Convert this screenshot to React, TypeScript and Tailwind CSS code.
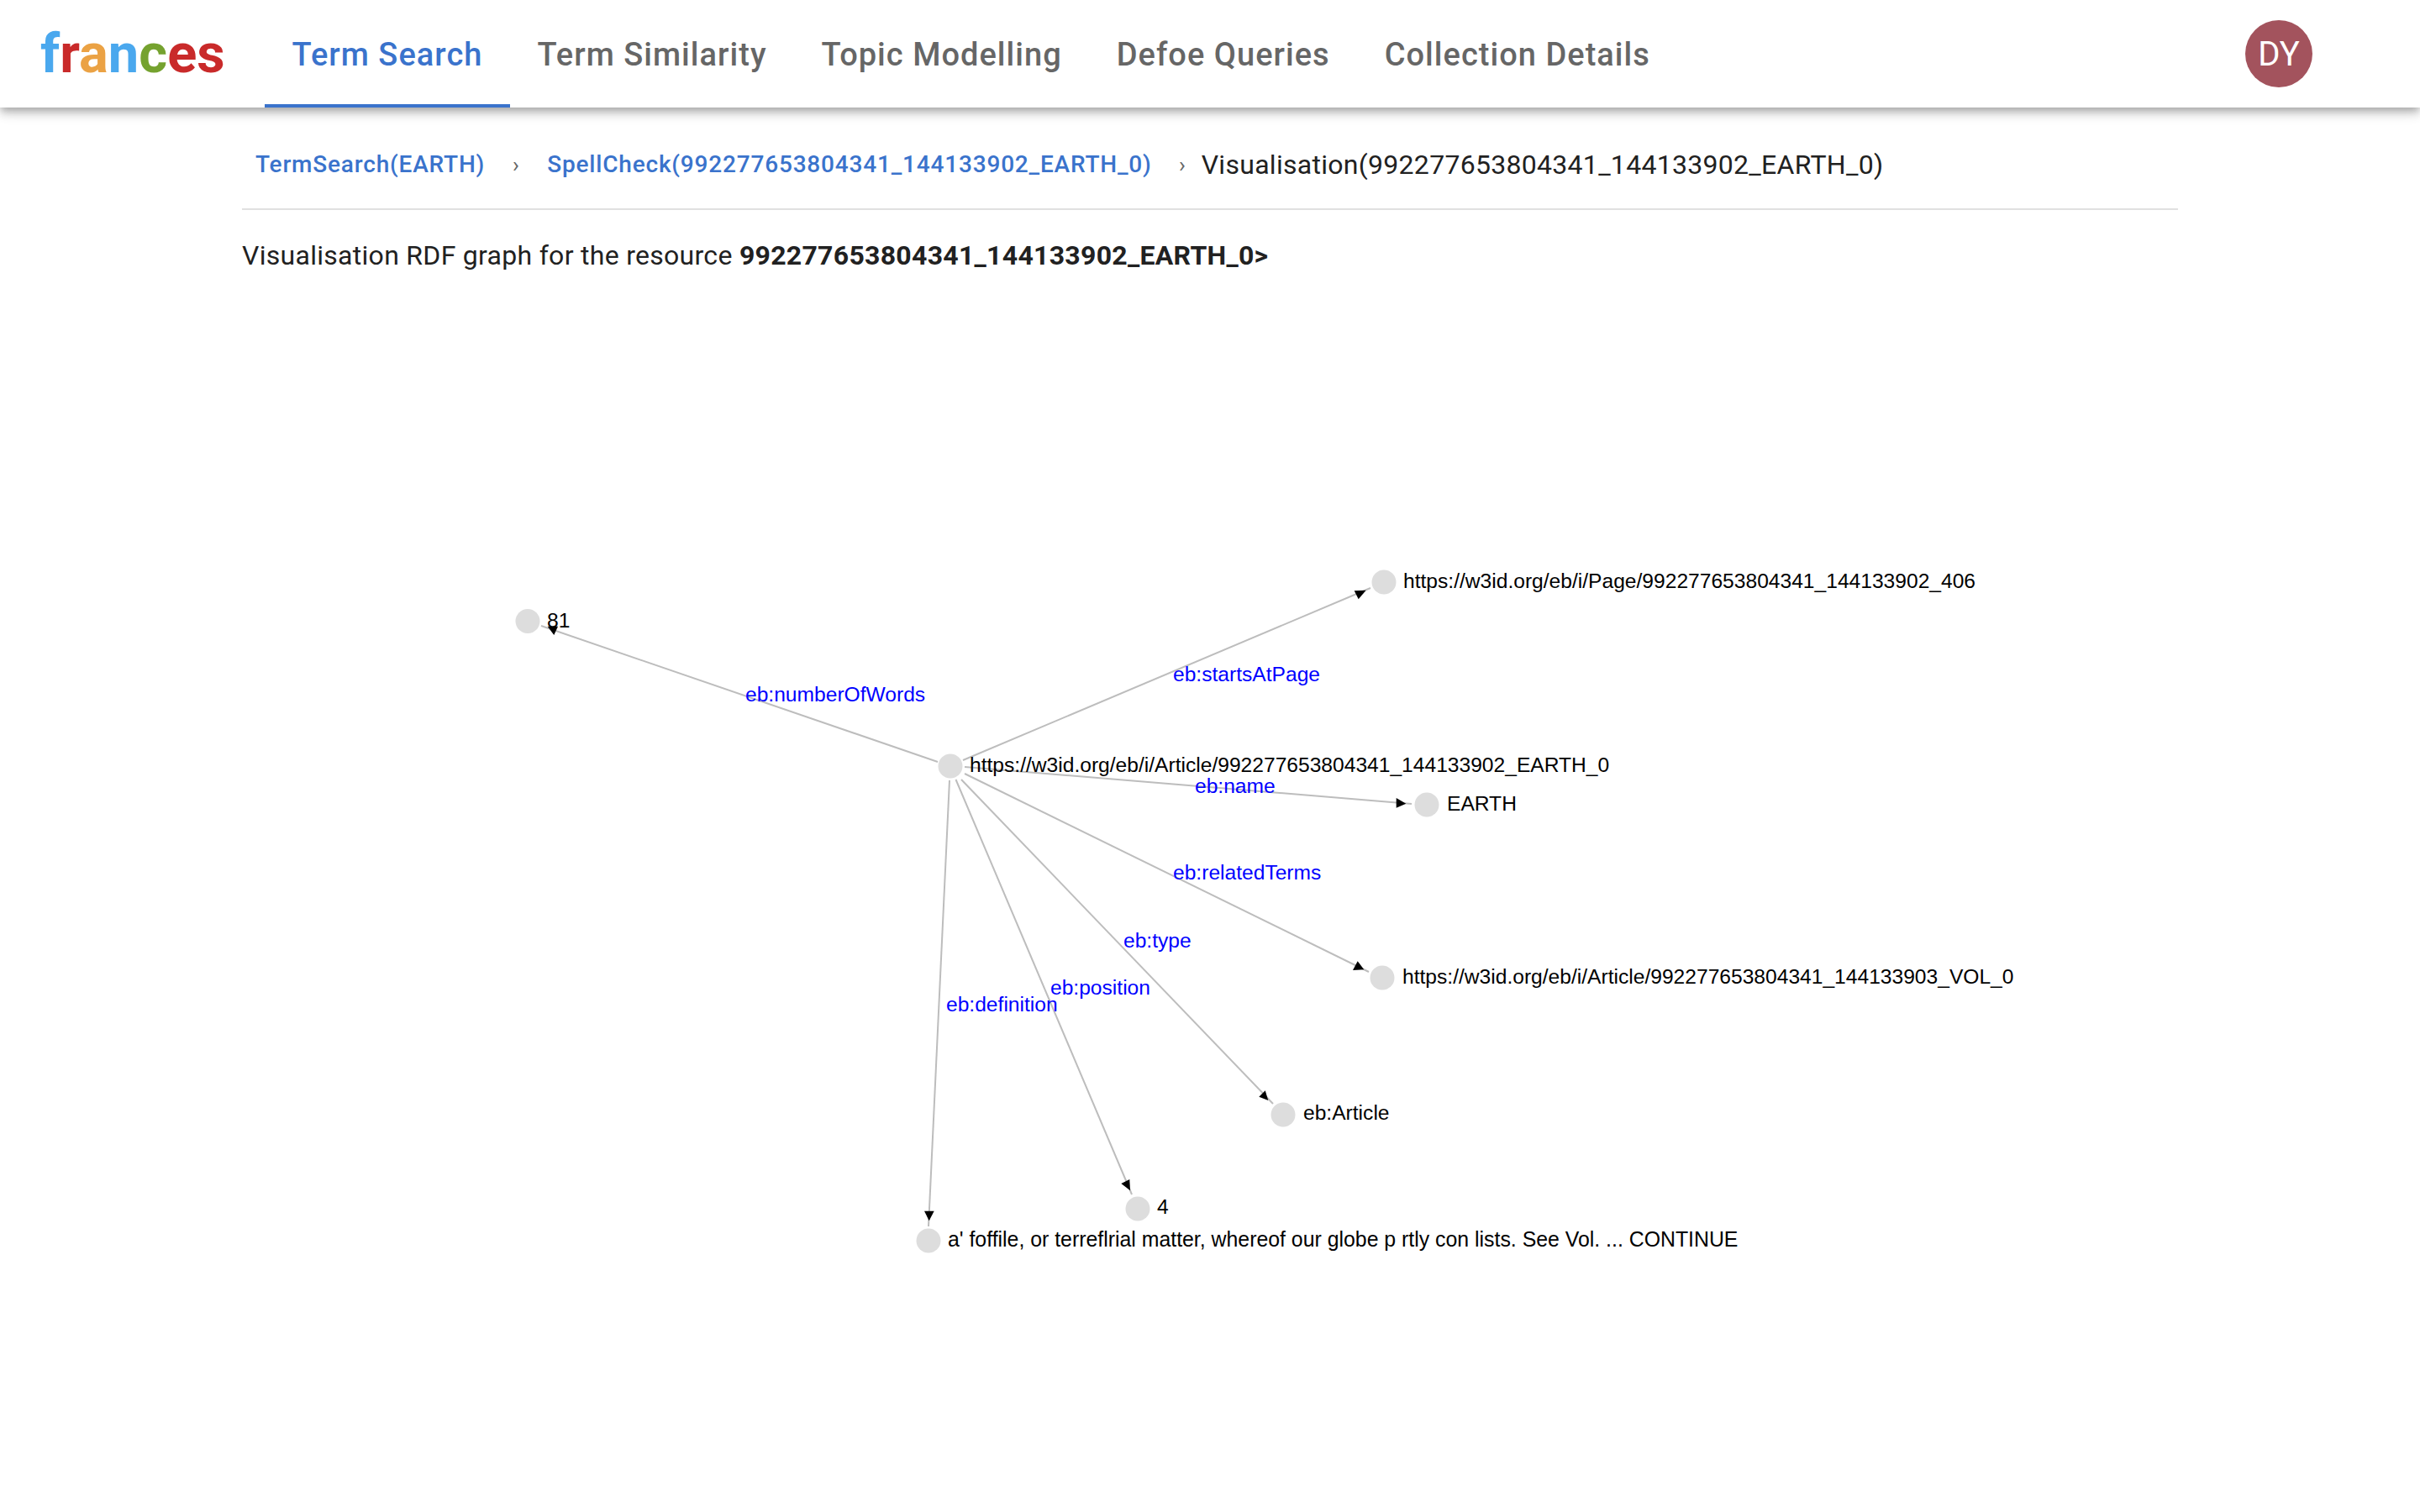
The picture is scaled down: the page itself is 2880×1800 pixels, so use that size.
const tabs = ['Term Similarity', 'Topic Modelling', 'Defoe Queries', 'Collection Details'];

const logoLetters = [
  { ch: 'f', cls: 'text-[#4aa8ee]' },
  { ch: 'r', cls: 'text-[#c92a2a]' },
  { ch: 'a', cls: 'text-[#eba244]' },
  { ch: 'n', cls: 'text-[#4aa8ee]' },
  { ch: 'c', cls: 'text-[#75a22f]' },
  { ch: 'e', cls: 'text-[#c92a2a]' },
  { ch: 's', cls: 'text-[#c92a2a]' },
];

// graph coordinates are page coordinates, see the viewBox on the svg
const nodes = [
  { cx: 628, cy: 739.5, label: '81', x: 651, y: 747 },
  { cx: 1131, cy: 912, label: 'https://w3id.org/eb/i/Article/992277653804341_144133902_EARTH_0', x: 1154, y: 919 },
  { cx: 1647, cy: 693, label: 'https://w3id.org/eb/i/Page/992277653804341_144133902_406', x: 1670, y: 700 },
  { cx: 1698, cy: 958, label: 'EARTH', x: 1722, y: 965 },
  { cx: 1645, cy: 1164, label: 'https://w3id.org/eb/i/Article/992277653804341_144133903_VOL_0', x: 1669, y: 1171 },
  { cx: 1527, cy: 1327, label: 'eb:Article', x: 1551, y: 1333 },
  { cx: 1354, cy: 1439, label: '4', x: 1377, y: 1445 },
  { cx: 1105, cy: 1477, label: "a' foffile, or terreflrial matter, whereof our globe p rtly con lists. See Vol. ... CONTINUE", x: 1128, y: 1484, size: 24.85 },
];

const edges = [
  { x1: 1116, y1: 907, x2: 644, y2: 745, arrow: '651.7,745.7 664,745.7 659.3,756' },
  { x1: 1146, y1: 905, x2: 1631, y2: 700, arrow: '1611.7,703.3 1625.7,702.7 1616.7,713.3' },
  { x1: 1148, y1: 913, x2: 1680, y2: 957, arrow: '1661.7,950 1673.3,956.7 1661.7,961.7' },
  { x1: 1148, y1: 921, x2: 1629, y2: 1157, arrow: '1610,1155 1615.7,1144.3 1623.3,1154.3' },
  { x1: 1144, y1: 928, x2: 1515, y2: 1314, arrow: '1498.3,1305.7 1505.7,1298.3 1509.3,1310' },
  { x1: 1137.5, y1: 928, x2: 1347, y2: 1422, arrow: '1334.3,1409 1344.3,1404 1345,1417.3' },
  { x1: 1130, y1: 929, x2: 1105, y2: 1460, arrow: '1100,1441.7 1111.7,1441.7 1105.7,1453.3' },
];

const edgeLabels = [
  { text: 'eb:numberOfWords', x: 887, y: 835 },
  { text: 'eb:startsAtPage', x: 1396, y: 811 },
  { text: 'eb:name', x: 1422, y: 944 },
  { text: 'eb:relatedTerms', x: 1396, y: 1047 },
  { text: 'eb:type', x: 1337, y: 1128 },
  { text: 'eb:position', x: 1250, y: 1184 },
  { text: 'eb:definition', x: 1126, y: 1204 },
];

function Header() {
  return (
    <header className="relative z-10 flex h-[128px] items-center bg-white shadow-[0_4px_8px_-2px_rgba(0,0,0,0.2),0_8px_10px_0_rgba(0,0,0,0.14),0_2px_20px_0_rgba(0,0,0,0.12)]">
      <div className="ml-[48px] w-[267px] shrink-0 text-[65px] leading-none font-bold">
        {logoLetters.map((l, i) => (
          <span key={i} className={l.cls}>{l.ch}</span>
        ))}
      </div>
      <nav className="flex h-full items-stretch text-[38px] font-medium tracking-[0.027em]">
        <div className="flex items-center border-b-4 border-[#3a73cc] px-[32.5px] pt-[6px] text-[#3a73cc]">Term Search</div>
        {tabs.map((t) => (
          <div key={t} className="flex items-center px-[32.5px] pt-[2px] text-[#666666]">{t}</div>
        ))}
      </nav>
      <div className="ml-auto mr-[128px] flex h-[80px] w-[80px] items-center justify-center rounded-full bg-[#a3535d] pt-[1px] text-[40px] text-white">
        DY
      </div>
    </header>
  );
}

function Breadcrumbs() {
  return (
    <div className="flex h-[122px] items-center border-b-2 border-[#e0e0e0] pt-[16px] pl-[16px] text-[28px] font-medium tracking-[0.029em] text-[#3a73cc]">
      <span>TermSearch(EARTH)</span>
      <span className="w-[74px] text-center text-[26px] font-normal text-[#666666]">›</span>
      <span>SpellCheck(992277653804341_144133902_EARTH_0)</span>
      <span className="w-[59px] pl-[14px] text-center text-[26px] font-normal text-[#666666]">›</span>
      <span className="text-[32px] font-normal tracking-[0.009em] text-[#212121]">Visualisation(992277653804341_144133902_EARTH_0)</span>
    </div>
  );
}

function Graph() {
  return (
    <svg className="block" width={2304} height={1440} viewBox="288 360 2304 1440" fontFamily='"Liberation Sans", Arial, sans-serif' fontSize={24.6}>
      {edges.map((e, i) => (
        <line key={i} x1={e.x1} y1={e.y1} x2={e.x2} y2={e.y2} stroke="#bdbdbd" strokeWidth={2} />
      ))}
      {nodes.map((n) => (
        <g key={n.label}>
          <circle cx={n.cx} cy={n.cy} r={14.5} fill="#dddddd" />
          <text x={n.x} y={n.y} fill="#000000" fontSize={n.size}>{n.label}</text>
        </g>
      ))}
      {edges.map((e, i) => (
        <polygon key={i} points={e.arrow} fill="#000000" />
      ))}
      {edgeLabels.map((l) => (
        <text key={l.text} x={l.x} y={l.y} fill="#0000ff">{l.text}</text>
      ))}
    </svg>
  );
}

export default function App() {
  return (
    <div className="min-h-[1800px] overflow-hidden bg-white font-['Roboto',sans-serif]">
      <Header />
      <main className="mx-[288px]">
        <Breadcrumbs />
        <p className="flex h-[110px] items-center pb-[2px] text-[32px] tracking-[0.009em] text-[#212121]">
          <span className="whitespace-pre">Visualisation RDF graph for the resource </span>
          <b className="font-bold">992277653804341_144133902_EARTH_0&gt;</b>
        </p>
        <Graph />
      </main>
    </div>
  );
}
